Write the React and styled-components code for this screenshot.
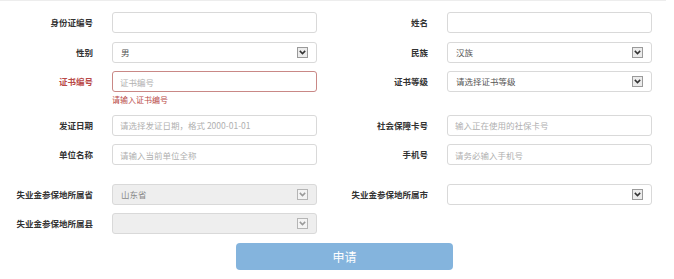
import styled, { createGlobalStyle } from 'styled-components';

const GlobalStyle = createGlobalStyle`
    body {
        margin: 0;
        background: #ffffff;
        font-family: "Noto Sans CJK SC", "Noto Sans", sans-serif;
    }
`;

const rows = [
    [
        { label: '身份证编号', kind: 'input' },
        { label: '姓名', kind: 'input' },
    ],
    [
        { label: '性别', kind: 'select', value: '男' },
        { label: '民族', kind: 'select', value: '汉族' },
    ],
    [
        { label: '证书编号', kind: 'input', placeholder: '证书编号', error: '请输入证书编号' },
        { label: '证书等级', kind: 'select', value: '请选择证书等级' },
    ],
    [
        { label: '发证日期', kind: 'input', placeholder: '请选择发证日期，格式 2000-01-01' },
        { label: '社会保障卡号', kind: 'input', placeholder: '输入正在使用的社保卡号' },
    ],
    [
        { label: '单位名称', kind: 'input', placeholder: '请输入当前单位全称' },
        { label: '手机号', kind: 'input', placeholder: '请务必输入手机号' },
    ],
    [
        { label: '失业金参保地所属省', kind: 'select', value: '山东省', disabled: true, spaced: true },
        { label: '失业金参保地所属市', kind: 'select', value: '' },
    ],
    [
        { label: '失业金参保地所属县', kind: 'select', value: '', disabled: true },
        null,
    ],
];

function Arrow({ disabled }) {
    return (
        <ArrowBox $disabled={disabled}>
            <svg width="7" height="5" viewBox="0 0 7 5">
                <path
                    d="M0.8 0.9 L3.5 3.6 L6.2 0.9"
                    fill="none"
                    stroke={disabled ? '#9a9a9a' : '#333'}
                    strokeWidth="1.5"
                />
            </svg>
        </ArrowBox>
    );
}

function Field({ item }) {
    if (!item) return null;
    return (
        <>
            <Label $error={!!item.error}>{item.label}</Label>
            <Cell>
                {item.kind === 'input' ? (
                    <Input placeholder={item.placeholder} $error={!!item.error} />
                ) : (
                    <SelectWrap>
                        <Select disabled={item.disabled} defaultValue={item.value}>
                            <option value={item.value}>{item.value}</option>
                        </Select>
                        <Arrow disabled={item.disabled} />
                    </SelectWrap>
                )}
                {item.error && <ErrorText>{item.error}</ErrorText>}
            </Cell>
        </>
    );
}

export default function App() {
    return (
        <>
            <GlobalStyle />
            <Page>
                <Form>
                    {rows.map((pair, i) => (
                        <Row key={i} $spaced={pair[0] && pair[0].spaced}>
                            <Field item={pair[0]} />
                            <Field item={pair[1]} />
                        </Row>
                    ))}
                </Form>
                <Submit type="button">申请</Submit>
            </Page>
        </>
    );
}

const Page = styled.div`
    width: 666px;
    height: 279px;
    border-top: 1px solid #ededed;
    box-sizing: border-box;
    overflow: hidden;
`;

const Form = styled.div`
    padding-top: 11px;
    display: flex;
    flex-direction: column;
    gap: 8.5px;
`;

const Row = styled.div`
    display: grid;
    grid-template-columns: 93px 205px 92px 205px;
    column-gap: 19px;
    align-items: start;
    margin-top: ${(p) => (p.$spaced ? '10px' : '0')};
`;

const Label = styled.div`
    height: 21px;
    line-height: 21px;
    text-align: right;
    font-size: 8.5px;
    font-weight: 700;
    color: ${(p) => (p.$error ? '#b94a48' : '#333333')};
    white-space: nowrap;
`;

const Cell = styled.div`
    display: flex;
    flex-direction: column;
`;

const Input = styled.input`
    display: block;
    width: 205px;
    height: 21px;
    box-sizing: border-box;
    border: 1px solid ${(p) => (p.$error ? '#c98886' : '#d9d9d9')};
    border-radius: 3px;
    padding: 0 7px;
    font-family: inherit;
    font-size: 8.5px;
    color: #555;
    background: #fff;
    outline: none;

    &::placeholder {
        color: #b0b0b0;
    }
`;

const SelectWrap = styled.div`
    position: relative;
    width: 205px;
    height: 21px;
`;

const Select = styled.select`
    display: block;
    appearance: none;
    width: 205px;
    height: 21px;
    box-sizing: border-box;
    border: 1px solid #d9d9d9;
    border-radius: 3px;
    padding: 0 8px;
    line-height: 19px;
    font-family: inherit;
    font-size: 8.5px;
    color: ${(p) => (p.disabled ? '#8a8a8a' : '#555')};
    background: ${(p) => (p.disabled ? '#eeeeee' : '#ffffff')};
    outline: none;
    opacity: 1;
`;

const ArrowBox = styled.span`
    position: absolute;
    right: 9px;
    top: 5px;
    width: 11px;
    height: 11px;
    box-sizing: border-box;
    border: 1px solid ${(p) => (p.$disabled ? '#b5b5b5' : '#9a9a9a')};
    background: ${(p) => (p.$disabled ? '#f4f4f4' : '#ececec')};
    display: flex;
    align-items: center;
    justify-content: center;
    pointer-events: none;
`;

const ErrorText = styled.div`
    margin-top: 2px;
    height: 12px;
    line-height: 12px;
    font-size: 8px;
    color: #b94a48;
`;

const Submit = styled.button`
    display: block;
    margin: 9px 0 0 236px;
    width: 217px;
    height: 27px;
    border: none;
    border-radius: 4px;
    background: #84b4dd;
    color: #ffffff;
    font-family: inherit;
    font-size: 12px;
`;
